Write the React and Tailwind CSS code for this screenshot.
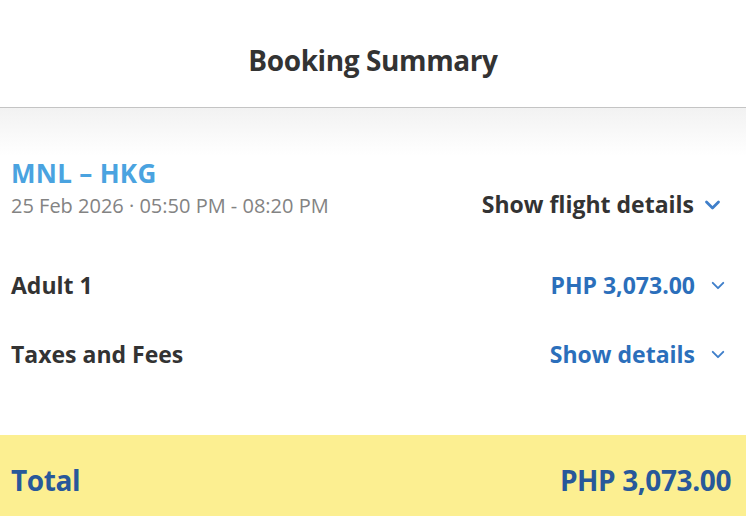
import React from 'react';

function Chevron({ className = '', w = 16, h = 10, sw = 2.6 }) {
  return (
    <svg width={w} height={h} viewBox="0 0 16 10" className={className} fill="none">
      <path d="M2 2 L8 8 L14 2" stroke="currentColor" strokeWidth={sw} strokeLinecap="round" strokeLinejoin="round" />
    </svg>
  );
}

export default function App() {
  const body = { fontFamily: '"Open Sans", "Noto Sans", sans-serif' };

  return (
    <div className="w-[746px] h-[516px] bg-white flex flex-col overflow-hidden" style={body}>
      {/* Header */}
      <div className="h-[108px] flex items-center justify-center border-b border-[#c4c4c4] shrink-0">
        <h1 className="text-[28px] font-bold text-[#333333] tracking-[-0.4px] pt-[12px]">
          Booking Summary
        </h1>
      </div>

      {/* Content */}
      <div className="flex-1 bg-white">
        <div className="bg-gradient-to-b from-[#f2f2f2] to-white h-[48px] -mb-[48px]" />
        <div className="px-[11px] pt-[50px] relative">
          <div className="flex justify-between items-end">
            <div>
              <div className="text-[26px] font-bold text-[#4aa3e0] leading-[30px] tracking-[0.3px]">MNL – HKG</div>
              <div className="text-[20px] text-[#838383] leading-[24px] mt-[6px]">25 Feb 2026 · 05:50 PM - 08:20 PM</div>
            </div>
            <div className="flex items-center gap-[10px] pr-[14px]">
              <span className="text-[23px] font-bold text-[#333333] leading-[28px]">Show flight details</span>
              <Chevron className="text-[#3f7fca] mt-[1px]" w={17} h={10} sw={2.8} />
            </div>
          </div>

          <div className="flex justify-between items-center mt-[52px]">
            <span className="text-[23px] font-bold text-[#333333] leading-[30px]">Adult 1</span>
            <div className="flex items-center gap-[16px] pr-[10px]">
              <span className="text-[23px] font-bold text-[#2b6fbb] leading-[30px]">PHP 3,073.00</span>
              <Chevron className="text-[#3f7fca] mt-[1px]" w={14} h={9} sw={2.2} />
            </div>
          </div>

          <div className="flex justify-between items-center mt-[39px]">
            <span className="text-[23px] font-bold text-[#333333] leading-[30px]">Taxes and Fees</span>
            <div className="flex items-center gap-[16px] pr-[10px]">
              <span className="text-[23px] font-bold text-[#2b6fbb] leading-[30px]">Show details</span>
              <Chevron className="text-[#3f7fca] mt-[1px]" w={14} h={9} sw={2.2} />
            </div>
          </div>
        </div>
      </div>

      {/* Total */}
      <div className="h-[81px] bg-[#fcef91] flex items-center justify-between px-[11px] pr-[15px] shrink-0">
        <span className="text-[28px] font-bold text-[#28589a] tracking-[-0.4px] pt-[8px]">Total</span>
        <span className="text-[28px] font-bold text-[#28589a] tracking-[-0.4px] pt-[8px]">PHP 3,073.00</span>
      </div>
    </div>
  );
}
